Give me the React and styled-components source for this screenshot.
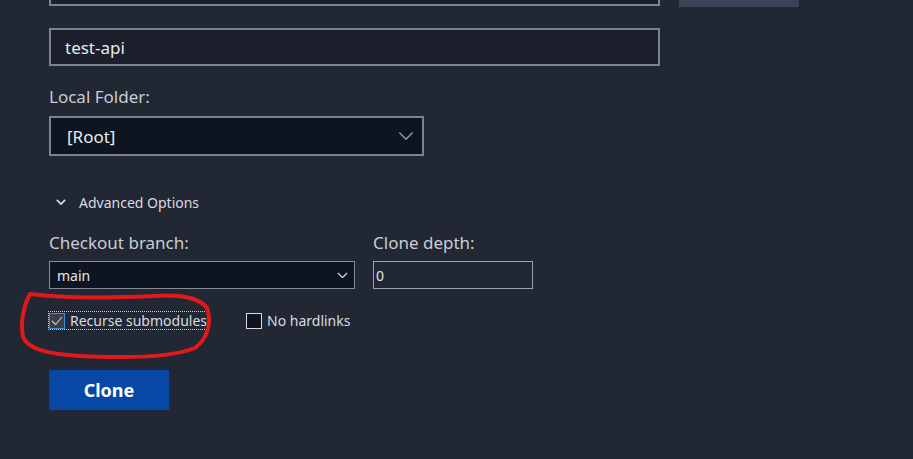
import React from "react";
import styled, { createGlobalStyle } from "styled-components";

const Global = createGlobalStyle`
  html, body { margin: 0; padding: 0; background: #212733; }
  body { font-family: "Segoe UI", "Noto Sans", "Open Sans", sans-serif; color: #d6d9de; }
`;

const Page = styled.div`
  position: relative;
  width: 913px;
  height: 459px;
  overflow: hidden;
  background: #212733;
  padding-left: 49px;
  box-sizing: border-box;
`;

const TopRow = styled.div`
  display: flex;
  align-items: flex-start;
  margin-top: -32px;
  gap: 19px;
`;

const TextInput = styled.div`
  box-sizing: border-box;
  width: ${(p) => p.$w}px;
  height: 38px;
  margin-top: ${(p) => p.$mt || 0}px;
  border: 2px solid #7d838c;
  background: #1a1f2b;
  color: #e9ebee;
  font-size: 17px;
  display: flex;
  align-items: center;
  padding-left: 14px;
`;

const GhostButton = styled.div`
  width: 120px;
  height: 39px;
  background: #3a4456;
`;

const Stack = styled.div`
  display: flex;
  flex-direction: column;
`;

const Label = styled.div`
  font-size: 17px;
  color: #c9cdd3;
  line-height: 22px;
  margin-top: ${(p) => p.$mt || 0}px;
  margin-bottom: ${(p) => p.$mb || 0}px;
`;

const BigSelect = styled.div`
  box-sizing: border-box;
  width: 375px;
  height: 40px;
  border: 2px solid #7d838c;
  background: #0f1520;
  color: #e9ebee;
  font-size: 17px;
  display: flex;
  align-items: center;
  justify-content: space-between;
  padding: 0 8px 0 16px;
`;

const Toggle = styled.div`
  display: flex;
  align-items: center;
  gap: 13px;
  margin: 36px 0 0 7px;
  font-size: 14px;
  color: #d9dce1;
  height: 20px;
`;

const FieldsRow = styled.div`
  display: flex;
  gap: 18px;
  margin-top: 20px;
`;

const SmallSelect = styled.div`
  box-sizing: border-box;
  width: 306px;
  height: 28px;
  border: 1px solid #858b94;
  background: #0e1420;
  color: #e4e6ea;
  font-size: 14px;
  display: flex;
  align-items: center;
  justify-content: space-between;
  padding: 0 6px 0 7px;
`;

const SmallInput = styled.div`
  box-sizing: border-box;
  width: 160px;
  height: 28px;
  border: 1px solid #9ea3ab;
  background: #212733;
  color: #e4e6ea;
  font-size: 14px;
  display: flex;
  align-items: center;
  padding-left: 2px;
`;

const CheckRow = styled.div`
  display: flex;
  align-items: center;
  gap: 38px;
  margin-top: 23px;
`;

const Check = styled.label`
  display: flex;
  align-items: center;
  gap: 5px;
  font-size: 14px;
  color: #d9dce1;
  outline: ${(p) => (p.$focus ? "1px dotted #c9ccd1" : "none")};
  outline-offset: 0px;
  height: 17px;
  padding-right: 1px;
`;

const Box = styled.span`
  box-sizing: border-box;
  width: 16px;
  height: 16px;
  border: 1px solid ${(p) => (p.$checked ? "#3d8fe0" : "#d8dbe0")};
  background: ${(p) => (p.$checked ? "#3a3f47" : "#0e1420")};
  display: flex;
  align-items: center;
  justify-content: center;
`;

const CloneButton = styled.button`
  width: 120px;
  height: 40px;
  margin-top: 41px;
  border: none;
  background: #0747a6;
  color: #fff;
  font-family: inherit;
  font-weight: 700;
  font-size: 18px;
  padding: 0;
`;

const Annotation = styled.svg`
  position: absolute;
  left: 0;
  top: 0;
  pointer-events: none;
`;

const Chevron = ({ size = 12, color = "#9aa0a8", w = 1.2 }) => (
  <svg width={size} height={size * 0.6} viewBox="0 0 12 7">
    <path d="M1 1 L6 6 L11 1" fill="none" stroke={color} strokeWidth={w} />
  </svg>
);

export default function App() {
  return (
    <>
      <Global />
      <Page>
        <TopRow>
          <TextInput $w={611} />
          <GhostButton />
        </TopRow>
        <Stack>
          <TextInput $w={611} $mt={21}>test-api</TextInput>
          <Label $mt={20} $mb={8}>Local Folder:</Label>
          <BigSelect>
            [Root]
            <Chevron size={16} color="#8c929b" w={1.1} />
          </BigSelect>
          <Toggle>
            <Chevron size={10} color="#d9dce1" w={2} />
            Advanced Options
          </Toggle>
          <FieldsRow>
            <Stack>
              <Label $mb={7}>Checkout branch:</Label>
              <SmallSelect>
                main
                <Chevron size={11} color="#d6d9de" w={1.4} />
              </SmallSelect>
            </Stack>
            <Stack>
              <Label $mb={7}>Clone depth:</Label>
              <SmallInput>0</SmallInput>
            </Stack>
          </FieldsRow>
          <CheckRow>
            <Check $focus>
              <Box $checked>
                <svg width="12" height="10" viewBox="0 0 12 10">
                  <path d="M1 5 L4.5 8.5 L11 1" fill="none" stroke="#d0d3d8" strokeWidth="1.1" />
                </svg>
              </Box>
              Recurse submodules
            </Check>
            <Check>
              <Box />
              No hardlinks
            </Check>
          </CheckRow>
          <div>
            <CloneButton>Clone</CloneButton>
          </div>
        </Stack>
        <Annotation width="913" height="459" viewBox="0 0 913 459">
          <path
            d="M30 294 C60 298 110 298 153 296 C180 294 200 298 207 308 C212 322 208 338 195 348 C170 358 120 358 80 356 C50 354 28 350 23 337 C20 322 24 305 30 294"
            fill="none"
            stroke="#e01a1a"
            strokeWidth="4"
            strokeLinecap="round"
          />
        </Annotation>
      </Page>
    </>
  );
}
